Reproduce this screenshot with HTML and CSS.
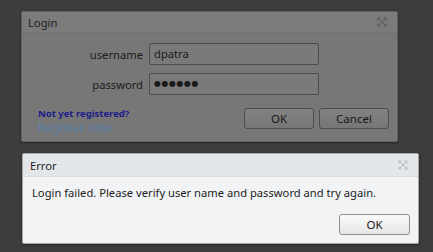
FILE: index.html
```html
<!DOCTYPE html>
<html lang="en">
<head>
    <meta charset="UTF-8">
    <title>Login</title>
    <link rel="stylesheet" href="styles.css">
</head>
<body>
    <div class="page">
        <div class="dialog login-dialog">
            <div class="dialog-title">
                <span>Login</span>
                <svg class="close-icon" width="10" height="10" viewBox="0 0 10 10">
                    <path d="M1.5 1.5 L8.5 8.5 M8.5 1.5 L1.5 8.5 M1 1 h2.5 M1 1 v2.5 M9 1 h-2.5 M9 1 v2.5 M1 9 h2.5 M1 9 v-2.5 M9 9 h-2.5 M9 9 v-2.5" stroke="currentColor" stroke-width="1" fill="none"/>
                </svg>
            </div>
            <div class="login-body">
                <div class="form-grid">
                    <label>username</label>
                    <div class="field">dpatra</div>
                    <label>password</label>
                    <div class="field dots">&#9679;&#9679;&#9679;&#9679;&#9679;&#9679;</div>
                </div>
                <div class="login-footer">
                    <div class="links">
                        <span class="not-registered">Not yet registered?</span>
                        <span class="register">Register now</span>
                    </div>
                    <div class="buttons">
                        <button class="btn dark-btn">OK</button>
                        <button class="btn dark-btn">Cancel</button>
                    </div>
                </div>
            </div>
        </div>

        <div class="dialog error-dialog">
            <div class="dialog-title">
                <span>Error</span>
                <svg class="close-icon" width="10" height="10" viewBox="0 0 10 10">
                    <path d="M1.5 1.5 L8.5 8.5 M8.5 1.5 L1.5 8.5 M1 1 h2.5 M1 1 v2.5 M9 1 h-2.5 M9 1 v2.5 M1 9 h2.5 M1 9 v-2.5 M9 9 h-2.5 M9 9 v-2.5" stroke="currentColor" stroke-width="1" fill="none"/>
                </svg>
            </div>
            <div class="error-body">
                <p>Login failed. Please verify user name and password and try again.</p>
                <div class="buttons">
                    <button class="btn light-btn">OK</button>
                </div>
            </div>
        </div>
    </div>
</body>
</html>
```

FILE: styles.css
```css
* {
    margin: 0;
    padding: 0;
    box-sizing: border-box;
}

body {
    font-family: 'Noto Sans', 'Open Sans', sans-serif;
    font-size: 11.2px;
    background-color: #3d3d3d;
    color: #222;
    min-height: 100vh;
}

.page {
    padding: 11px 0 0 21px;
    display: flex;
    flex-direction: column;
    gap: 11px;
}

.dialog {
    border: 1px solid #5c6167;
    border-radius: 2px;
    box-shadow: 0 1px 3px rgba(0,0,0,0.4);
}

.dialog-title {
    display: flex;
    justify-content: space-between;
    align-items: center;
    padding: 0 10px 0 6px;
}

.close-icon {
    display: block;
}

/* login window (greyed out behind the error) */
.login-dialog {
    width: 377px;
    height: 131px;
    background-color: #777777;
}

.login-dialog .dialog-title {
    height: 21px;
    background-color: #7b7b7b;
    border-bottom: 1px solid #717171;
    color: #1c1c1c;
}

.login-dialog .close-icon {
    color: #555;
}

.login-body {
    padding: 10px 8px 0 0;
}

.form-grid {
    display: grid;
    grid-template-columns: 121px 170px;
    column-gap: 6px;
    row-gap: 8px;
    align-items: center;
}

.form-grid label {
    text-align: right;
    color: #1c1c1c;
}

.field {
    height: 22px;
    border: 1px solid #4c4c4c;
    border-radius: 2px;
    background-color: #7a7a7a;
    padding: 0 4px;
    line-height: 20px;
    color: #1a1a1a;
}

.dots {
    font-size: 8px;
    letter-spacing: 0.5px;
    font-family: 'DejaVu Sans', sans-serif;
}

.login-footer {
    display: flex;
    justify-content: space-between;
    align-items: flex-start;
    margin-top: 13px;
}

.links {
    display: flex;
    flex-direction: column;
    gap: 1px;
    padding-left: 16px;
}

.not-registered {
    font-size: 9.5px;
    font-weight: bold;
    color: #1c1c8a;
    line-height: 12px;
}

.register {
    font-size: 12px;
    color: #5d83a8;
    line-height: 14px;
}

.buttons {
    display: flex;
    gap: 5px;
    justify-content: flex-end;
}

.btn {
    font-family: inherit;
    font-size: 11.5px;
    width: 70px;
    height: 21px;
    border-radius: 3px;
    cursor: pointer;
}

.dark-btn {
    background: linear-gradient(#828282, #767676);
    border: 1px solid #4e4e4e;
    color: #1a1a1a;
}

/* error message box */
.error-dialog {
    width: 397px;
    height: 91px;
    background-color: #f2f3f5;
    border-color: #a3a8ad;
    margin-left: 1px;
}

.error-dialog .dialog-title {
    height: 23px;
    background-color: #e4e7ea;
    border-bottom: 1px solid #d8dbde;
    padding-left: 7px;
    color: #1c1c1c;
}

.error-dialog .close-icon {
    color: #b4b8bc;
}

.error-body {
    padding: 8px 8px 0 9px;
}

.error-body p {
    color: #1c1c1c;
    margin-bottom: 14px;
}

.light-btn {
    width: 71px;
    background: linear-gradient(#fbfbfb, #e6e6e6);
    border: 1px solid #8d9195;
    color: #1a1a1a;
}
```
